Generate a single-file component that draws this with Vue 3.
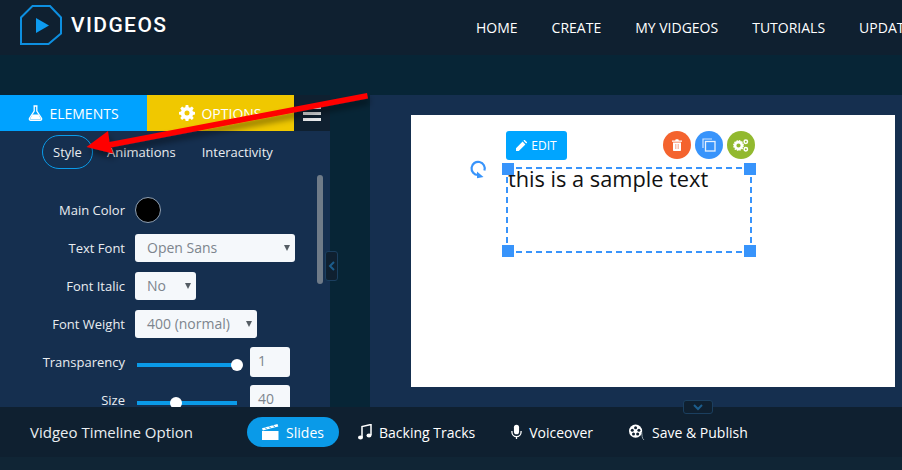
<template>
  <div class="page">
    <header class="topbar">
      <div class="brand">
        <svg class="brand-mark" width="42" height="40" viewBox="0 0 42 40">
          <path d="M1 39V12.500L12.500 1H30l11 11.500v16L28.500 39z" fill="none" stroke="#0d8fe0" stroke-width="2" />
          <path d="M16 13l13 7.500-13 7.500z" fill="#0d9bf0" />
        </svg>
        <span class="brand-name">VIDGEOS</span>
      </div>
      <nav class="nav">
        <a v-for="item in navItems" :key="item">{{ item }}</a>
      </nav>
    </header>

    <div class="subbar"></div>

    <main class="workspace">
      <aside class="sidebar">
        <div class="tabs">
          <div class="tab tab-elements">
            <svg width="15" height="16" viewBox="0 0 15 16">
              <path d="M5.500 1h4M6.200 1v5L1.500 13.200c-.5 1 .1 2.100 1.200 2.100h9.600c1.100 0 1.700-1.100 1.200-2.100L8.800 6V1" fill="none" stroke="#fff" stroke-width="1.300" />
              <path d="M4.500 9.500h6l2.300 4.200c.2.500 0 .9-.5.900H2.700c-.5 0-.7-.4-.5-.9z" fill="#fff" />
            </svg>
            ELEMENTS
          </div>
          <div class="tab tab-options">
            <svg width="16" height="16" viewBox="0 0 16 16">
              <path d="M6.700 0h2.600l.4 2.200 1.300.6 1.900-1.300 1.800 1.800-1.300 1.900.6 1.300 2 .4v2.600l-2 .4-.6 1.300 1.300 1.900-1.800 1.800-1.900-1.300-1.300.6-.4 2.200H6.700l-.4-2.200-1.300-.6-1.900 1.300-1.800-1.800 1.300-1.900-.6-1.300-2-.4V7l2-.4.6-1.300-1.300-1.900 1.800-1.800L5 2.800l1.300-.6zM8 5.500a2.500 2.500 0 1 0 0 5 2.500 2.500 0 0 0 0-5z" fill="#fff" fill-rule="evenodd" />
            </svg>
            OPTIONS
          </div>
          <div class="tab tab-menu">
            <span></span><span></span><span></span>
          </div>
        </div>

        <div class="panel">
          <div class="subtabs">
            <span class="subtab active">Style</span>
            <span class="subtab">Animations</span>
            <span class="subtab">Interactivity</span>
          </div>

          <div class="form">
            <label>Main Color</label>
            <div class="swatch"></div>

            <label>Text Font</label>
            <div class="select font-select">Open Sans</div>

            <label>Font Italic</label>
            <div class="select italic-select">No</div>

            <label>Font Weight</label>
            <div class="select weight-select">400 (normal)</div>

            <label>Transparency</label>
            <div class="slider-row">
              <div class="slider"><i class="knob" :style="{ left: '100px' }"></i></div>
              <div class="num">1</div>
            </div>

            <label>Size</label>
            <div class="slider-row">
              <div class="slider"><i class="knob" :style="{ left: '39px' }"></i></div>
              <div class="num">40</div>
            </div>
          </div>

          <div class="scrollbar"></div>
        </div>
      </aside>

      <div class="gutter">
        <div class="collapse-side">
          <svg width="8" height="10" viewBox="0 0 8 10"><path d="M6 1 2 5l4 4" fill="none" stroke="#1c5d8c" stroke-width="2" /></svg>
        </div>
      </div>

      <section class="stage">
        <div class="canvas">
          <button class="edit-btn">
            <svg width="11" height="11" viewBox="0 0 11 11"><path d="M0 11V8.200L6.600 1.600l2.800 2.800L2.800 11zM7.400.8 8 .2c.3-.3.700-.3 1 0l1.800 1.800c.3.300.3.700 0 1l-.6.600z" fill="#fff" /></svg>
            EDIT
          </button>

          <div class="round-btn btn-delete">
            <svg width="10" height="12" viewBox="0 0 10 12"><path d="M0 1.500h3.200L3.700.3h2.600l.5 1.200H10v1.200H0zM1 3.500h8V11c0 .6-.4 1-1 1H2c-.6 0-1-.4-1-1z" fill="#fff" /><path d="M3.500 5v5M5 5v5M6.500 5v5" stroke="#f4a58a" stroke-width=".7" /></svg>
          </div>
          <div class="round-btn btn-copy">
            <svg width="14" height="14" viewBox="0 0 14 14"><path d="M1 10V1h9" fill="none" stroke="#cfe4fd" stroke-width="1.200" /><rect x="3.500" y="3.500" width="9.500" height="9.500" fill="none" stroke="#e6f1fe" stroke-width="1.300" /></svg>
          </div>
          <div class="round-btn btn-settings">
            <svg width="16" height="13" viewBox="0 0 16 13">
              <circle cx="5.500" cy="6.500" r="3.400" fill="none" stroke="#fff" stroke-width="2.600" />
              <circle cx="5.500" cy="6.500" r="4.800" fill="none" stroke="#fff" stroke-width="1.200" stroke-dasharray="1.500 1" />
              <circle cx="12.800" cy="2.800" r="1.700" fill="none" stroke="#fff" stroke-width="1.500" />
              <circle cx="12.800" cy="10.200" r="1.700" fill="none" stroke="#fff" stroke-width="1.500" />
            </svg>
          </div>

          <svg class="rotate" width="17" height="19" viewBox="0 0 17 19">
            <path d="M14.400 10.500A6.600 6.600 0 1 0 8 15" fill="none" stroke="#3894fb" stroke-width="2.200" />
            <path d="M7 11.500l6.500 5.500-6.500 1.200z" fill="#3894fb" />
          </svg>

          <div class="text-box">
            <span class="sample">this is a sample text</span>
            <i class="handle tl"></i>
            <i class="handle tr"></i>
            <i class="handle bl"></i>
            <i class="handle br"></i>
          </div>
        </div>
      </section>
    </main>

    <footer class="timeline">
      <span class="timeline-title">Vidgeo Timeline Option</span>
      <div class="timeline-links">
        <a class="link pill">
          <svg width="17" height="16" viewBox="0 0 17 16">
            <path d="M0 7h16.500v9H0z" fill="#fff" />
            <path d="M0 4.200 15.500 0l.8 2.500L.8 6.500z" fill="#fff" />
            <path d="M3 3.500l2 2M7 2.500l2 2M11 1.300l2 2" stroke="#0a9ae8" stroke-width="1" />
          </svg>
          Slides
        </a>
        <a class="link">
          <svg width="14" height="16" viewBox="0 0 14 16">
            <path d="M4 13V2.500L13 .5V11" fill="none" stroke="#fff" stroke-width="1.500" />
            <ellipse cx="2.500" cy="13.500" rx="2.500" ry="2" fill="#fff" />
            <ellipse cx="11" cy="11.500" rx="2.500" ry="2" fill="#fff" />
          </svg>
          Backing Tracks
        </a>
        <a class="link">
          <svg width="11" height="16" viewBox="0 0 12 16">
            <rect x="3.200" y="0" width="5.600" height="10.500" rx="2.800" fill="#fff" />
            <path d="M1 7v1a5 5 0 0 0 10 0V7M6 13v2.500" fill="none" stroke="#fff" stroke-width="1.400" />
          </svg>
          Voiceover
        </a>
        <a class="link">
          <svg width="16" height="17" viewBox="0 0 17 17">
            <circle cx="7" cy="7" r="7" fill="#fff" />
            <g fill="#0f2030">
              <circle cx="7" cy="3.400" r="1.600" />
              <circle cx="3.500" cy="6" r="1.600" />
              <circle cx="10.500" cy="6" r="1.600" />
              <circle cx="4.800" cy="10.200" r="1.600" />
              <circle cx="9.200" cy="10.200" r="1.600" />
            </g>
            <path d="M13.500 8c.5 3 0 7 2.500 8.500" fill="none" stroke="#9aa6ae" stroke-width="1" />
          </svg>
          Save &amp; Publish
        </a>
      </div>
      <div class="collapse-bottom">
        <svg width="10" height="7" viewBox="0 0 10 7"><path d="M1 1l4 4 4-4" fill="none" stroke="#1c5d8c" stroke-width="2" /></svg>
      </div>
    </footer>
    <div class="footer-strip"></div>

    <svg class="arrow" width="902" height="470" viewBox="0 0 902 470">
      <defs>
        <filter id="arrow-shadow" x="-10%" y="-30%" width="120%" height="170%">
          <feDropShadow dx="2" dy="5" stdDeviation="3" flood-color="#000" flood-opacity="0.45" />
        </filter>
      </defs>
      <path d="M367 93 109.500 142 108 131 86.500 147 113 153.500 111 147.500 368 98.500z" fill="#f00" filter="url(#arrow-shadow)" />
    </svg>
  </div>
</template>

<script setup>
const navItems = ["HOME", "CREATE", "MY VIDGEOS", "TUTORIALS", "UPDATES"];
</script>

<style>
html,
body {
  margin: 0;
  overflow: hidden;
}
</style>

<style scoped>
.page {
  position: relative;
  width: 902px;
  height: 470px;
  overflow: hidden;
  background: #072536;
  font-family: "Open Sans", sans-serif;
  color: #fff;
}

.topbar {
  display: flex;
  align-items: center;
  height: 55px;
  background: #0f2030;
}

.brand {
  display: flex;
  align-items: center;
  gap: 9px;
  width: 476px;
  padding: 0 0 5px 20px;
  box-sizing: border-box;
  flex-shrink: 0;
}

.brand-name {
  font-family: "Roboto", sans-serif;
  font-size: 21px;
  font-weight: 500;
  letter-spacing: 1.400px;
  line-height: 1;
}

.nav {
  display: flex;
  gap: 34px;
  white-space: nowrap;
  font-size: 14px;
}

.subbar {
  height: 40px;
}

.workspace {
  display: flex;
  height: 312px;
}

.sidebar {
  width: 330px;
  flex-shrink: 0;
}

.tabs {
  display: flex;
  height: 36px;
}

.tab {
  display: flex;
  align-items: center;
  justify-content: center;
  gap: 6px;
  width: 147px;
  font-size: 14px;
}

.tab-elements {
  background: #00a2ff;
}

.tab-options {
  position: relative;
  background: #f0c800;
}

.tab-options::after {
  content: "";
  position: absolute;
  left: 62px;
  top: 36px;
  border-left: 11px solid transparent;
  border-right: 11px solid transparent;
  border-top: 10px solid #f0c800;
}

.tab-menu {
  flex-direction: column;
  gap: 3px;
  width: 36px;
  background: #0f2030;
}

.tab-menu span {
  display: block;
  width: 18px;
  height: 3px;
  background: #e8eaec;
}

.panel {
  position: relative;
  height: 276px;
  overflow: hidden;
  background: #152f4f;
}

.subtabs {
  display: flex;
  align-items: center;
  height: 34px;
  padding: 4px 0 0 42px;
  font-size: 13px;
  color: #e9edf1;
}

.subtab {
  margin-right: 26px;
}

.subtab.active {
  display: flex;
  align-items: center;
  justify-content: center;
  box-sizing: border-box;
  width: 51px;
  height: 34px;
  margin-right: 14px;
  border: 1px solid #0a9be9;
  border-radius: 17px;
}

.form {
  display: grid;
  grid-template-columns: 125px 1fr;
  column-gap: 10px;
  grid-auto-rows: 28px;
  row-gap: 10px;
  align-items: center;
  margin-top: 27px;
  font-size: 13px;
}

.form label {
  text-align: right;
  color: #e9edf1;
}

.swatch {
  box-sizing: border-box;
  width: 26px;
  height: 26px;
  background: #000;
  border: 1px solid #8fa0b3;
  border-radius: 50%;
}

.select {
  position: relative;
  display: flex;
  align-items: center;
  box-sizing: border-box;
  height: 28px;
  padding: 0 0 2px 12px;
  background: #f5f8fb;
  border-radius: 3px;
  color: #7d858d;
  font-size: 14px;
}

.select::after {
  content: "";
  position: absolute;
  right: 5px;
  top: 11px;
  border-left: 3.500px solid transparent;
  border-right: 3.500px solid transparent;
  border-top: 6px solid #555d64;
}

.font-select {
  width: 160px;
}

.italic-select {
  width: 61px;
}

.weight-select {
  width: 122px;
}

.slider-row {
  display: flex;
  align-items: center;
  height: 28px;
  padding-left: 2px;
}

.slider {
  position: relative;
  width: 100px;
  height: 4px;
  margin-top: 6px;
  background: #0a9ae8;
}

.knob {
  position: absolute;
  top: -4px;
  width: 12px;
  height: 12px;
  margin-left: -6px;
  background: #fff;
  border-radius: 50%;
}

.num {
  box-sizing: border-box;
  width: 40px;
  height: 30px;
  margin-left: 13px;
  padding: 4px 0 0 8px;
  background: #f5f8fb;
  border-radius: 3px;
  color: #7d858d;
  font-size: 14px;
}

.scrollbar {
  position: absolute;
  left: 317px;
  top: 44px;
  width: 6px;
  height: 109px;
  background: #6f7b88;
  border-radius: 3px;
}

.gutter {
  position: relative;
  width: 40px;
  flex-shrink: 0;
}

.collapse-side {
  position: absolute;
  left: -5px;
  top: 156px;
  display: flex;
  align-items: center;
  justify-content: center;
  box-sizing: border-box;
  width: 13px;
  height: 30px;
  background: #0f2030;
  border: 1px solid #1b3f5f;
  border-radius: 3px;
}

.stage {
  flex: 1;
  padding: 20px 7px 20px 41px;
  background: #152f4f;
}

.canvas {
  position: relative;
  height: 272px;
  background: #fff;
}

.edit-btn {
  position: absolute;
  left: 95px;
  top: 16px;
  display: flex;
  align-items: center;
  justify-content: center;
  gap: 4px;
  width: 61px;
  height: 29px;
  padding: 0;
  background: #00a5ff;
  border: none;
  border-radius: 3px;
  color: #fff;
  font-family: inherit;
  font-size: 12px;
}

.round-btn {
  position: absolute;
  top: 16px;
  display: flex;
  align-items: center;
  justify-content: center;
  width: 28px;
  height: 28px;
  border-radius: 50%;
}

.btn-delete {
  left: 252px;
  background: #f4632e;
}

.btn-copy {
  left: 284px;
  background: #3894fb;
}

.btn-settings {
  left: 316px;
  background: #92b92f;
}

.rotate {
  position: absolute;
  left: 59px;
  top: 45px;
}

.text-box {
  position: absolute;
  left: 95px;
  top: 52px;
  box-sizing: border-box;
  width: 246px;
  height: 86px;
  border: 2px dashed #3894fb;
}

.sample {
  display: block;
  margin-top: -5px;
  color: #111;
  font-size: 21.750px;
  line-height: 30px;
  white-space: nowrap;
}

.handle {
  position: absolute;
  width: 12px;
  height: 12px;
  background: #3894fb;
}

.tl {
  left: -6px;
  top: -6px;
}

.tr {
  right: -6px;
  top: -6px;
}

.bl {
  left: -6px;
  bottom: -6px;
}

.br {
  right: -6px;
  bottom: -6px;
}

.timeline {
  position: relative;
  display: flex;
  align-items: center;
  height: 50px;
  padding-left: 30px;
  background: #0f2030;
}

.timeline-title {
  width: 217px;
  font-size: 15px;
  color: #e9edf1;
}

.timeline-links {
  display: flex;
  align-items: center;
  gap: 36px;
  font-size: 14px;
}

.link {
  display: flex;
  align-items: center;
  gap: 7px;
}

.pill {
  justify-content: center;
  width: 92px;
  height: 30px;
  margin-right: -17px;
  background: #0a9ae8;
  border-radius: 15px;
}

.collapse-bottom {
  position: absolute;
  left: 683px;
  top: -7px;
  display: flex;
  align-items: center;
  justify-content: center;
  box-sizing: border-box;
  width: 30px;
  height: 14px;
  background: #0f2030;
  border: 1px solid #1b3f5f;
  border-radius: 3px;
}

.footer-strip {
  height: 13px;
  background: #102535;
}

.arrow {
  position: absolute;
  left: 0;
  top: 0;
  pointer-events: none;
}
</style>
